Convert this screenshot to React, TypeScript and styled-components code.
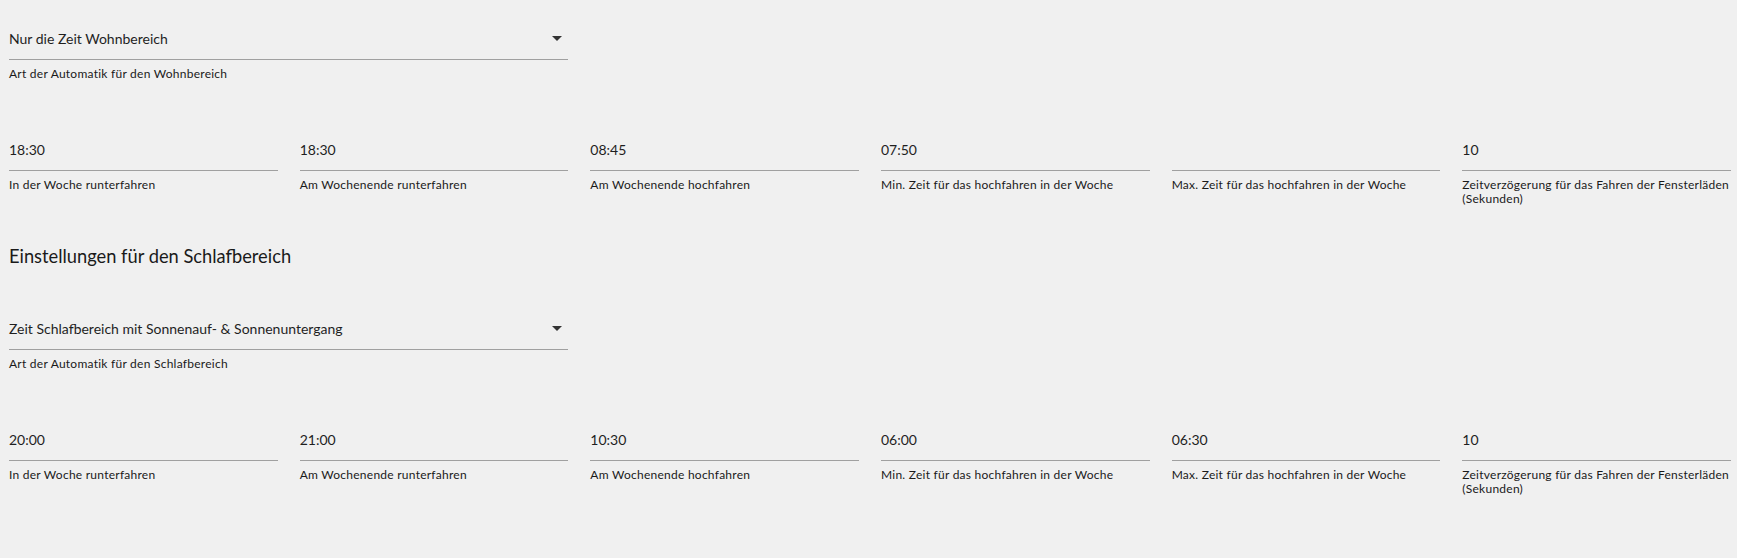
import styled, { createGlobalStyle } from 'styled-components';

const GlobalStyle = createGlobalStyle`
	html, body {
		margin: 0;
		padding: 0;
		background: #f0f0f0;
	}
	body {
		font-family: Lato, "Open Sans", "Liberation Sans", sans-serif;
		color: #1f1f1f;
	}
`

const Page = styled.div`
	padding: 29px 6px 40px 9px;
`

const Section = styled.section`
	display: flex;
	flex-direction: column;
`

const Heading = styled.h2`
	margin: 38px 0 51px;
	font-size: 18.3px;
	line-height: 24px;
	font-weight: 400;
	color: #1a1a1a;
`

const Grid = styled.div`
	display: grid;
	grid-template-columns: repeat(6, 1fr);
	column-gap: 22px;
	margin-top: 59px;
`

const SelectGrid = styled.div`
	display: grid;
	grid-template-columns: repeat(6, 1fr);
	column-gap: 22px;
`

const Field = styled.div<{ span?: number }>`
	grid-column: span ${props => props.span ?? 1};
	display: flex;
	flex-direction: column;
	min-width: 0;
`

const InputBox = styled.div`
	display: flex;
	align-items: center;
	justify-content: space-between;
	height: 20px;
	padding-bottom: 10px;
	border-bottom: 1px solid #a0a0a0;
	font-size: 14px;
	line-height: 20px;
	color: #1f1f1f;
`

const Arrow = styled.span`
	width: 0;
	height: 0;
	margin-right: 6px;
	margin-top: -2px;
	border-left: 5px solid transparent;
	border-right: 5px solid transparent;
	border-top: 5px solid #333;
`

const Helper = styled.div`
	margin-top: 7px;
	font-size: 12px;
	letter-spacing: 0.25px;
	line-height: 14px;
	color: #1a1a1a;
`

interface TimeField {
	value: string;
	label: string;
}

interface Area {
	title?: string;
	mode: string;
	modeLabel: string;
	fields: TimeField[];
}

const areas: Area[] = [
	{
		mode: 'Nur die Zeit Wohnbereich',
		modeLabel: 'Art der Automatik für den Wohnbereich',
		fields: [
			{ value: '18:30', label: 'In der Woche runterfahren' },
			{ value: '18:30', label: 'Am Wochenende runterfahren' },
			{ value: '08:45', label: 'Am Wochenende hochfahren' },
			{ value: '07:50', label: 'Min. Zeit für das hochfahren in der Woche' },
			{ value: '', label: 'Max. Zeit für das hochfahren in der Woche' },
			{ value: '10', label: 'Zeitverzögerung für das Fahren der Fensterläden (Sekunden)' },
		],
	},
	{
		title: 'Einstellungen für den Schlafbereich',
		mode: 'Zeit Schlafbereich mit Sonnenauf- & Sonnenuntergang',
		modeLabel: 'Art der Automatik für den Schlafbereich',
		fields: [
			{ value: '20:00', label: 'In der Woche runterfahren' },
			{ value: '21:00', label: 'Am Wochenende runterfahren' },
			{ value: '10:30', label: 'Am Wochenende hochfahren' },
			{ value: '06:00', label: 'Min. Zeit für das hochfahren in der Woche' },
			{ value: '06:30', label: 'Max. Zeit für das hochfahren in der Woche' },
			{ value: '10', label: 'Zeitverzögerung für das Fahren der Fensterläden (Sekunden)' },
		],
	},
];

function App() {
	return (
		<>
			<GlobalStyle />
			<Page>
				{areas.map((area, i) => (
					<Section key={i}>
						{area.title && <Heading>{area.title}</Heading>}
						<SelectGrid>
							<Field span={2}>
								<InputBox>
									<span>{area.mode}</span>
									<Arrow />
								</InputBox>
								<Helper>{area.modeLabel}</Helper>
							</Field>
						</SelectGrid>
						<Grid>
							{area.fields.map((f, j) => (
								<Field key={j}>
									<InputBox>{f.value}</InputBox>
									<Helper>{f.label}</Helper>
								</Field>
							))}
						</Grid>
					</Section>
				))}
			</Page>
		</>
	)
}

export default App;
